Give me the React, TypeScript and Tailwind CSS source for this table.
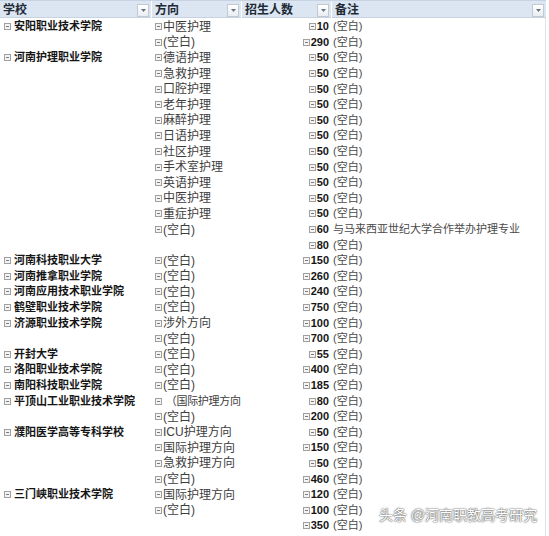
import React from "react";

type Row = {
  school?: string;
  dir?: string;
  num?: string;
  note?: string;
  small?: boolean;
};

const rows: Row[] = [
  { school: "安阳职业技术学院", dir: "中医护理", num: "10", note: "(空白)" },
  { dir: "(空白)", num: "290", note: "(空白)" },
  { school: "河南护理职业学院", dir: "德语护理", num: "50", note: "(空白)" },
  { dir: "急救护理", num: "50", note: "(空白)" },
  { dir: "口腔护理", num: "50", note: "(空白)" },
  { dir: "老年护理", num: "50", note: "(空白)" },
  { dir: "麻醉护理", num: "50", note: "(空白)" },
  { dir: "日语护理", num: "50", note: "(空白)" },
  { dir: "社区护理", num: "50", note: "(空白)" },
  { dir: "手术室护理", num: "50", note: "(空白)" },
  { dir: "英语护理", num: "50", note: "(空白)" },
  { dir: "中医护理", num: "50", note: "(空白)" },
  { dir: "重症护理", num: "50", note: "(空白)" },
  { dir: "(空白)", num: "60", note: "与马来西亚世纪大学合作举办护理专业" },
  { num: "80", note: "(空白)" },
  { school: "河南科技职业大学", dir: "(空白)", num: "150", note: "(空白)" },
  { school: "河南推拿职业学院", dir: "(空白)", num: "260", note: "(空白)" },
  { school: "河南应用技术职业学院", dir: "(空白)", num: "240", note: "(空白)" },
  { school: "鹤壁职业技术学院", dir: "(空白)", num: "750", note: "(空白)" },
  { school: "济源职业技术学院", dir: "涉外方向", num: "100", note: "(空白)" },
  { dir: "(空白)", num: "700", note: "(空白)" },
  { school: "开封大学", dir: "(空白)", num: "55", note: "(空白)" },
  { school: "洛阳职业技术学院", dir: "(空白)", num: "400", note: "(空白)" },
  { school: "南阳科技职业学院", dir: "(空白)", num: "185", note: "(空白)" },
  { school: "平顶山工业职业技术学院", dir: " （国际护理方向", num: "80", note: "(空白)", small: true },
  { dir: "(空白)", num: "200", note: "(空白)" },
  { school: "濮阳医学高等专科学校", dir: "ICU护理方向", num: "50", note: "(空白)" },
  { dir: "国际护理方向", num: "150", note: "(空白)" },
  { dir: "急救护理方向", num: "50", note: "(空白)" },
  { dir: "(空白)", num: "460", note: "(空白)" },
  { school: "三门峡职业技术学院", dir: "国际护理方向", num: "120", note: "(空白)" },
  { dir: "(空白)", num: "100", note: "(空白)" },
  { num: "350", note: "(空白)" },
];

const font = { fontFamily: '"Liberation Sans", "Noto Sans CJK SC", sans-serif' };

function Minus() {
  return (
    <svg width="7" height="7" viewBox="0 0 7 7" className="shrink-0">
      <rect x="0.5" y="0.5" width="6" height="6" fill="#f4f4f4" stroke="#a0a0a0" />
      <line x1="2" y1="3.5" x2="5" y2="3.5" stroke="#7a7a7a" />
    </svg>
  );
}

function Filter() {
  return (
    <div className="ml-auto mr-[2px] w-[12px] h-[13px] border border-[#c3c9d1] bg-gradient-to-b from-white to-[#e9edf2] flex items-center justify-center">
      <svg width="5" height="3" viewBox="0 0 5 3">
        <path d="M0 0h5L2.5 3z" fill="#6b7280" />
      </svg>
    </div>
  );
}

function HeadCell({ label, last }: { label: string; last?: boolean }) {
  return (
    <div
      className={
        "flex items-center pl-[3px] text-[12px] font-bold text-[#1f2a36] " +
        (last ? "" : "border-r border-white")
      }
    >
      <span>{label}</span>
      <Filter />
    </div>
  );
}

export default function App() {
  return (
    <div className="relative w-[549px] h-[536px] overflow-hidden bg-white" style={font}>
      <div className="grid grid-cols-[152px_90px_90px_1fr] h-[18px] bg-[#dbe6f2] border-t border-[#b9c3cf] border-b border-[#c7d3e0] mr-[3px]">
        <HeadCell label="学校" />
        <HeadCell label="方向" />
        <HeadCell label="招生人数" />
        <HeadCell label="备注" last />
      </div>

      <div className="border-r border-[#e3e3e3] mr-[3px] pt-[1px]">
        {rows.map((r, i) => (
          <div key={i} className="grid grid-cols-[152px_90px_90px_1fr] h-[15.6px] leading-none">
            <div className="flex items-center gap-[3px] pl-[4px] overflow-hidden whitespace-nowrap">
              {r.school && (
                <>
                  <Minus />
                  <span className="text-[11px] font-bold text-[#151515]">{r.school}</span>
                </>
              )}
            </div>
            <div className="flex items-center gap-[1px] pl-[3px] whitespace-nowrap">
              {r.dir && (
                <>
                  <Minus />
                  <span
                    className={
                      (r.small ? "text-[11px] tracking-[-0.3px] " : "text-[12px] ") +
                      "text-[#3d3d3d] whitespace-pre"
                    }
                  >
                    {r.dir}
                  </span>
                </>
              )}
            </div>
            <div className="flex items-center justify-end gap-[1px] pr-[3px]">
              {r.num && (
                <>
                  <Minus />
                  <span className="text-[11px] font-bold text-[#151515]">{r.num}</span>
                </>
              )}
            </div>
            <div className="flex items-center pl-[1px] whitespace-nowrap">
              <span className="text-[11px] text-[#4a4a4a]">{r.note}</span>
            </div>
          </div>
        ))}
        <div className="h-[15.6px] flex items-center pl-[48px] pt-[6px]">
          <span className="text-[11px] font-bold text-[#151515]">商丘医学 高等专科</span>
        </div>
      </div>

      <div
        className="absolute right-[12px] bottom-[10px] text-[14px] text-white"
        style={{ textShadow: "0 0 2px #555, 0 0 1px #333" }}
      >
        头条 @河南职教高考研究
      </div>
    </div>
  );
}
